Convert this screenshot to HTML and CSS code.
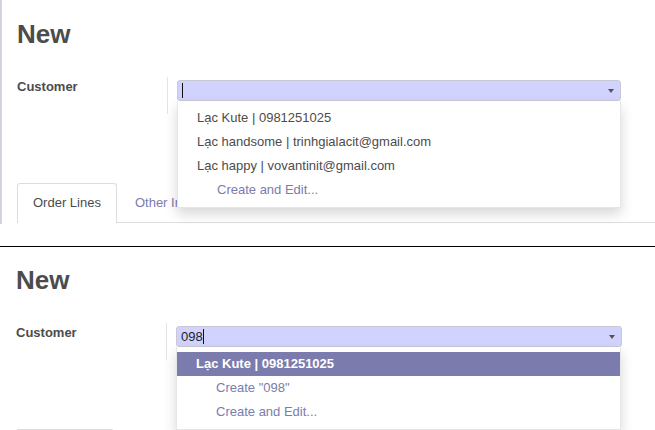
FILE: index.html
```html
<!DOCTYPE html>
<html>
<head>
<meta charset="utf-8">
<link rel="stylesheet" href="styles.css">
</head>
<body>
<div class="shot shot-one">
  <div class="sheet">
    <h1 class="title">New</h1>
    <div class="field-row">
      <div class="label">Customer</div>
      <div class="cell">
        <div class="combo">
          <div class="input"><span class="caret"></span></div>
          <span class="arrow"></span>
          <ul class="menu">
            <li class="item">Lạc Kute | 0981251025</li>
            <li class="item">Lạc handsome | trinhgialacit@gmail.com</li>
            <li class="item">Lạc happy | vovantinit@gmail.com</li>
            <li class="item action">Create and Edit...</li>
          </ul>
        </div>
      </div>
    </div>
    <div class="tabs">
      <div class="tab active">Order Lines</div>
      <div class="tab">Other Information</div>
    </div>
  </div>
</div>
<div class="divider"></div>
<div class="shot shot-two">
  <div class="sheet">
    <h1 class="title">New</h1>
    <div class="field-row">
      <div class="label">Customer</div>
      <div class="cell">
        <div class="combo">
          <div class="input">098<span class="caret"></span></div>
          <span class="arrow"></span>
          <ul class="menu">
            <li class="item selected">Lạc Kute | 0981251025</li>
            <li class="item action">Create "098"</li>
            <li class="item action">Create and Edit...</li>
          </ul>
        </div>
      </div>
    </div>
    <div class="tabs">
      <div class="tab active tab-stub"></div>
    </div>
  </div>
</div>
</body>
</html>
```

FILE: styles.css
```css
*, *::before, *::after {
  box-sizing: border-box;
}
html, body {
  margin: 0;
  padding: 0;
  background: #ffffff;
}
body {
  width: 655px;
  height: 430px;
  overflow: hidden;
  font-family: "Liberation Sans", Arial, sans-serif;
  font-size: 13px;
  color: #4c4c4c;
}
.shot {
  position: relative;
  overflow: hidden;
}
.shot-one {
  height: 246px;
}
.shot-one .sheet {
  height: 224px;
  border-left: 2px solid #d3d3e0;
  padding: 19px 0 0 15px;
}
.shot-two {
  height: 183px;
}
.shot-two .sheet {
  padding: 18px 0 0 16px;
}
.divider {
  height: 1px;
  background: #000000;
}
.title {
  margin: 0;
  font-size: 26px;
  line-height: 30px;
  font-weight: bold;
  color: #4c4c4c;
}
.field-row {
  display: flex;
  margin-top: 28px;
  height: 37px;
}
.label {
  width: 150px;
  font-weight: bold;
  line-height: 20px;
}
.cell {
  width: 454px;
  border-left: 1px solid #e4e4e4;
  padding-left: 9px;
}
.combo {
  position: relative;
  margin-top: 3px;
  width: 444px;
}
.input {
  height: 21px;
  background: #d2d2ff;
  border: 1px solid #c9c9d6;
  border-radius: 3px;
  padding-left: 4px;
  display: flex;
  align-items: center;
  color: #222;
}
.caret {
  display: inline-block;
  width: 1px;
  height: 15px;
  background: #111;
}
.arrow {
  position: absolute;
  right: 7px;
  top: 9px;
  width: 0;
  height: 0;
  border-left: 3.5px solid transparent;
  border-right: 3.5px solid transparent;
  border-top: 4px solid #555;
}
.menu {
  position: absolute;
  left: 0;
  top: 21px;
  width: 444px;
  margin: 0;
  padding: 5px 0;
  list-style: none;
  background: #ffffff;
  border: 1px solid #e6e6e6;
  border-top: none;
  box-shadow: 0 6px 12px rgba(0, 0, 0, 0.16);
  z-index: 5;
}
.item {
  height: 24px;
  line-height: 24px;
  padding-left: 19px;
  color: #4c4c4c;
  white-space: nowrap;
}
.item.action {
  padding-left: 39px;
  color: #7c7bad;
}
.item.selected {
  background: #7c7bad;
  color: #ffffff;
  font-weight: bold;
}
.tabs {
  display: flex;
  margin-top: 69px;
  border-bottom: 1px solid #dddddd;
  width: 700px;
}
.tab {
  padding: 10px 15px;
  line-height: 18px;
  border: 1px solid transparent;
  border-bottom: none;
  border-radius: 3px 3px 0 0;
  margin-right: 2px;
  color: #7c7bad;
  white-space: nowrap;
}
.tab.active {
  border-color: #dddddd;
  color: #4c4c4c;
  background: #fff;
  margin-bottom: -1px;
  padding-bottom: 11px;
}
.tab-stub {
  width: 98px;
  height: 40px;
}
.shot-two .cell {
  width: 455px;
}
.shot-two .combo {
  width: 446px;
}
.shot-two .menu {
  width: 445px;
}
.shot-two .tabs {
  margin-top: 69px;
}
```
